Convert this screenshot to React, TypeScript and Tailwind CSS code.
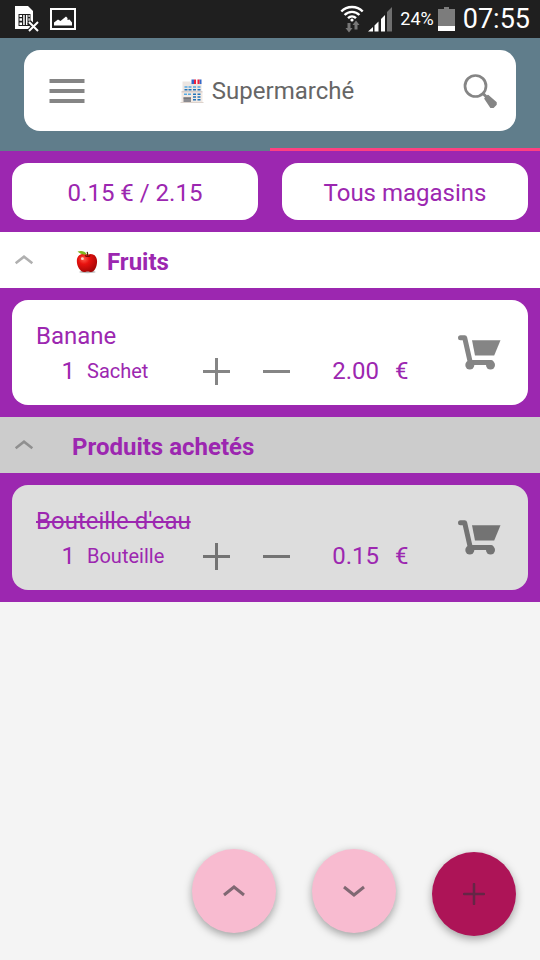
import type { ReactNode } from "react";
import clsx from "clsx";

type Item = {
  name: string;
  quantity: number;
  unit: string;
  price: string;
  bought: boolean;
};

const groups: { title: string; icon?: ReactNode; bought: boolean; items: Item[] }[] = [
  {
    title: "Fruits",
    icon: <AppleIcon />,
    bought: false,
    items: [{ name: "Banane", quantity: 1, unit: "Sachet", price: "2.00", bought: false }],
  },
  {
    title: "Produits achetés",
    bought: true,
    items: [{ name: "Bouteille d'eau", quantity: 1, unit: "Bouteille", price: "0.15", bought: true }],
  },
];

function AppleIcon() {
  return (
    <svg viewBox="-3.5 -1 28 26" className="h-[26px] w-[27px] shrink-0" aria-hidden="true">
      <defs>
        <radialGradient id="apple" cx="0.35" cy="0.3" r="0.8">
          <stop offset="0" stopColor="#ff5a4a" />
          <stop offset="0.35" stopColor="#e8120f" />
          <stop offset="1" stopColor="#9c0505" />
        </radialGradient>
      </defs>
      <ellipse cx="12.5" cy="22.3" rx="8.5" ry="1.3" fill="#b9b9b9" />
      <path d="M13 4.5C10.500 2.300 1.500 2.600 1.500 11c0 5.500 3.500 11.300 7.500 11.300 1.700 0 2.500-.5 3.800-.5s2 .5 3.500.5c3.700 0 6.200-5.800 6.200-10.800C22.500 4 16 2.300 13 4.500Z" fill="url(#apple)" />
      <path d="M10 5.200c1.500 1.200 4 1.200 5.500 0" fill="none" stroke="#7d0808" strokeWidth="1.200" />
      <path d="M12.800 5.500c0-1.700-.1-2.800-.6-4" fill="none" stroke="#4a2a10" strokeWidth="1.300" />
      <path d="M11.700 4C9 5 5 4 2.300 1.200 5 .2 10 0 11.700 4Z" fill="#7fb51f" />
      <circle cx="7.300" cy="8.500" r="1.500" fill="#ffd0c8" />
    </svg>
  );
}

function StoreIcon() {
  return (
    <svg viewBox="0 0 24 24" className="h-6 w-6 shrink-0" aria-hidden="true">
      <path d="M2.500 2.500h8V4h11v8.500h-19Z" fill="#ece5e1" />
      <path d="M1.500 13h21v10h-21Z" fill="#f1e9e3" />
      <path d="M1.500 12.300h21v1h-21Z" fill="#c9beb9" />
      <path d="M.5 23h23v1H.5Z" fill="#ddd3cd" />
      <path d="M11.500.500h10v4.500h-10Z" fill="#f4f4f8" />
      <path d="M11.500.500h2.500v4.500h-2.500ZM19.500.500h2v4.500h-2Z" fill="#3568c8" />
      <path d="M14 .500h2v4.500h-2ZM17.500.500h2v4.500h-2Z" fill="#f0203c" />
      <path d="M4.500 7.300h3v1.500h-3zM8.500 7.300h3v1.500h-3zM13 7.300h3v1.500h-3zM17.500 7.300h3v1.500h-3zM4 14.500h3V16H4zM8 14.500h3V16H8z" fill="#55a9e3" />
      <path d="M4.500 10h3v1.500h-3zM8.500 10h3v1.500h-3zM13 10h3v1.500h-3zM17.500 10h3v1.500h-3zM13 14.500h3V16h-3zM17.500 14.500h3V16h-3zM13 17.200h3v1.500h-3zM17.500 17.200h3v1.500h-3zM13 20h3v1.500h-3zM17.500 20h3v1.500h-3z" fill="#1f72b8" />
      <path d="M3.500 18.500h7.500V23H3.500Z" fill="#8b8b90" />
      <path d="M3.500 18.500h7.500v1H3.500Z" fill="#626267" />
    </svg>
  );
}

function StatusBar() {
  return (
    <div className="flex h-[38px] items-center bg-[#1f1f1f] pr-2.5 pl-3.5 text-white">
      <svg viewBox="0 0 26 28" className="h-7 w-[26px]" aria-hidden="true">
        <path d="M1 1h13l5 5v18H1Z" fill="#fff" />
        <path d="M4.500 9h12v12h-12Z" fill="#1f1f1f" />
        <path d="M5.500 10h2.500v2H5.500zM5.500 13.300h2.500v2.500H5.500zM5.500 17.500h2.500V20H5.500zM9.200 10h1.500v10H9.200zM12 10h1.500v10H12zM14.500 10h1.200v2h-1.200zM14.500 13.300h1.200v2.500h-1.200z" fill="#fff" />
        <path d="m15 17 9.500 9.500M24.500 17 15 26.500" stroke="#1f1f1f" strokeWidth="5" />
        <path d="m15 17 9 9M24 17l-9 9" stroke="#fff" strokeWidth="2" />
      </svg>
      <svg viewBox="0 0 26 22" className="ml-2.5 h-[22px] w-[26px]" aria-hidden="true">
        <path d="M1 1h24v20H1Z" fill="none" stroke="#fff" strokeWidth="2" />
        <path d="M4 17.500v-3l4-3 2.500 1.500L16 8.500l1.500 1.500v2l2-.5 2.500 3v3Z" fill="#fff" />
      </svg>
      <svg viewBox="0 0 24 28" className="ml-auto h-7 w-6" aria-hidden="true">
        <g fill="none" stroke="#fff" strokeWidth="2.400">
          <path d="M1.300 6.500c5.700-6 15.700-6 21.400 0" />
          <path d="M4.600 10c4-4.200 10.800-4.200 14.800 0" />
          <path d="M8 13.200c2.300-2.300 5.700-2.300 8 0" />
        </g>
        <circle cx="12" cy="15" r="1.600" fill="#fff" />
        <path d="M7.500 18h3v5h2L9 27.500 5.500 23h2ZM14.500 24.500h3V20h2L16 15.500 12.500 20h2Z" fill="#777" />
      </svg>
      <svg viewBox="0 0 24 25" className="ml-1 h-[25px] w-6" aria-hidden="true">
        <path d="M0 24.500 5 20v4.500ZM6.500 18.500l4-4v10h-4ZM13 12l4-4v16.500h-4Z" fill="#fff" />
        <path d="m19 5 5-5v24.500h-5Z" fill="#6f6f6f" />
      </svg>
      <span className="ml-2 text-lg leading-[38px]">24%</span>
      <svg viewBox="0 0 17 24" className="ml-1 h-6 w-[17px]" aria-hidden="true">
        <path d="M6 0h5v2h6v22H0V2h6Z" fill="#7c7c7c" />
        <path d="M0 19h17v5H0Z" fill="#fff" />
      </svg>
      <span className="ml-2 text-[27px] leading-[38px]">07:55</span>
    </div>
  );
}

function SearchBar() {
  return (
    <header className="relative bg-[#607d8b] px-6 pt-3 pb-5">
      <div className="flex h-[81px] items-center rounded-2xl bg-white">
        <button type="button" aria-label="Menu" className="flex h-full w-[86px] items-center justify-center">
          <svg viewBox="0 0 36 24" className="h-6 w-9" aria-hidden="true">
            <path d="M.5 0h35v4H.5ZM.5 10h35v4H.5ZM.5 20h35v4H.5Z" fill="#858585" />
          </svg>
        </button>
        <h1 className="flex flex-1 items-center justify-center gap-2 pr-5 text-2xl text-[#666]">
          <StoreIcon />
          Supermarché
        </h1>
        <button type="button" aria-label="Rechercher" className="flex h-full w-[72px] items-center justify-center">
          <svg viewBox="0 0 34 34" className="h-[34px] w-[34px]" aria-hidden="true">
            <circle cx="12.500" cy="12" r="10.500" fill="none" stroke="#858585" strokeWidth="2.700" />
            <path d="m20 19.500 4 4" stroke="#858585" strokeWidth="3" />
            <path d="m22 24.500 3-3 8 7v2l-3 3h-2Z" fill="#858585" stroke="#858585" strokeWidth="1.500" strokeLinejoin="round" />
          </svg>
        </button>
      </div>
      <div className="absolute right-0 bottom-0 h-[3px] w-1/2 bg-[#ff4081]" />
    </header>
  );
}

function ItemCard({ item }: { item: Item }) {
  const iconColor = item.bought ? "text-[#737373]" : "text-[#858585]";

  return (
    <li className={clsx("flex rounded-2xl", item.bought ? "bg-[#ddd]" : "bg-white")}>
      <div className="min-w-0 flex-1 pt-5 pb-[15px] pl-6 text-2xl text-[#9c27b0]">
        <p className={clsx(item.bought && "line-through decoration-2")}>{item.name}</p>
        <div className="flex h-[38px] items-center">
          <span className="w-[39px] text-right">{item.quantity}</span>
          <span className="ml-3 flex-1 text-xl">{item.unit}</span>
          <button type="button" aria-label="Augmenter" className={clsx("flex w-[60px] justify-center", iconColor)}>
            <svg viewBox="0 0 27 27" className="h-[27px] w-[27px]" aria-hidden="true">
              <path d="M12 0h3v12h12v3H15v12h-3V15H0v-3h12Z" fill="currentColor" />
            </svg>
          </button>
          <button type="button" aria-label="Diminuer" className={clsx("flex w-[60px] justify-center", iconColor)}>
            <svg viewBox="0 0 27 27" className="h-[27px] w-[27px]" aria-hidden="true">
              <path d="M0 12h27v3H0Z" fill="currentColor" />
            </svg>
          </button>
          <span className="w-[73px] text-right">{item.price}</span>
          <span className="ml-4 w-[35px]">€</span>
        </div>
      </div>
      <button type="button" aria-label="Acheter" className={clsx("flex w-[98px] items-center justify-center", iconColor)}>
        <svg viewBox="0 0 43 35" className="h-[35px] w-[43px]" aria-hidden="true">
          <path d="M2.500 2.700h4.200L12.300 27.500H33" fill="none" stroke="currentColor" strokeWidth="5" strokeLinecap="round" strokeLinejoin="round" />
          <path d="M14 5.200h28.500l-6.300 15.300H17Z" fill="currentColor" />
          <circle cx="11.800" cy="30" r="4.500" fill="currentColor" />
          <circle cx="32.500" cy="30" r="4.500" fill="currentColor" />
        </svg>
      </button>
    </li>
  );
}

function Chevron({ down = false, className }: { down?: boolean; className: string }) {
  return (
    <svg viewBox="0 0 24 12" className={className} fill="none" stroke="currentColor" aria-hidden="true">
      <path d={down ? "m2 2 10 8 10-8" : "m2 10 10-8 10 8"} />
    </svg>
  );
}

export default function App() {
  return (
    <div className="min-h-screen bg-[#f4f4f4] font-['Roboto',sans-serif]">
      <StatusBar />
      <SearchBar />

      <main className="text-[#9c27b0]">
        <div className="grid grid-cols-2 gap-6 bg-[#9c27b0] p-3 text-2xl">
          <button type="button" className="h-[57px] rounded-2xl bg-white pt-0.5">0.15 € / 2.15</button>
          <button type="button" className="h-[57px] rounded-2xl bg-white pt-0.5">Tous magasins</button>
        </div>

        {groups.map((group) => (
          <section key={group.title}>
            <h2 className={clsx("text-2xl font-bold", group.bought ? "bg-[#ccc]" : "bg-white")}>
              <button type="button" className="flex h-14 w-full items-center pl-3.5">
                <Chevron className={clsx("mr-[38px] h-2.5 w-5 stroke-3", group.bought ? "text-[#8f8f8f]" : "text-[#b0b0b0]")} />
                <span className="flex items-center gap-2 pt-1">
                  {group.icon}
                  {group.title}
                </span>
              </button>
            </h2>
            <ul className="bg-[#9c27b0] p-3">
              {group.items.map((item) => (
                <ItemCard key={item.name} item={item} />
              ))}
            </ul>
          </section>
        ))}
      </main>

      {/* Floating actions */}
      <div className="fixed right-6 bottom-6 flex items-start gap-9 text-[#806873]">
        <button type="button" aria-label="Monter" className="mb-[3px] flex h-21 w-21 items-center justify-center rounded-full bg-[#f8bbd0] shadow-[0_3px_8px_rgba(0,0,0,0.35)]">
          <Chevron className="h-3 w-6 stroke-3" />
        </button>
        <button type="button" aria-label="Descendre" className="mb-[3px] flex h-21 w-21 items-center justify-center rounded-full bg-[#f8bbd0] shadow-[0_3px_8px_rgba(0,0,0,0.35)]">
          <Chevron down className="h-3 w-6 stroke-3" />
        </button>
        <button type="button" aria-label="Ajouter" className="mt-[3px] flex h-21 w-21 items-center justify-center rounded-full bg-[#ad1457] shadow-[0_3px_8px_rgba(0,0,0,0.35)]">
          <svg viewBox="0 0 22 22" className="h-[22px] w-[22px]" aria-hidden="true">
            <path d="M11 1v20M1 11h20" stroke="#652646" strokeWidth="2.500" strokeLinecap="round" />
          </svg>
        </button>
      </div>
    </div>
  );
}
